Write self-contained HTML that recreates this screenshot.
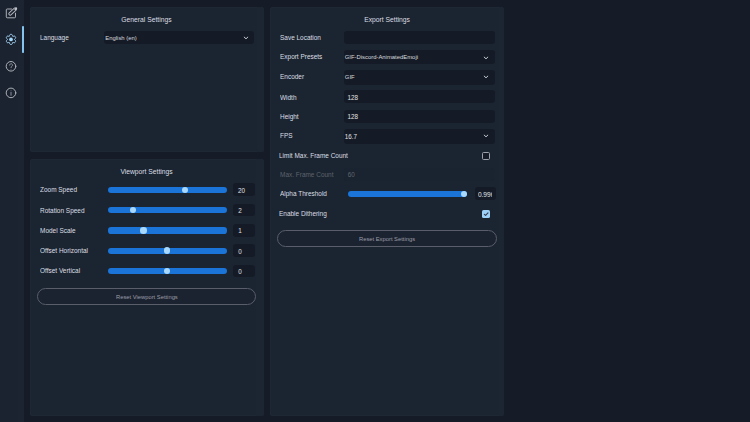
<!DOCTYPE html>
<html><head><meta charset="utf-8">
<style>
*{box-sizing:border-box;margin:0;padding:0}
html,body{width:750px;height:422px;overflow:hidden;background:#161c27;font-family:"Liberation Sans",sans-serif;color:#dcdee3}
div,svg{position:absolute}
#side{left:0;top:0;width:23.6px;height:422px;background:#1b2330}
#side2{left:17.5px;top:0;width:6.1px;height:422px;background:#1c2431}
.ind{left:22px;top:26.2px;width:1.5px;height:27px;background:#84c3ee;border-radius:0.75px}
.panel{background:#1b2531;border-radius:2.5px;overflow:hidden;box-shadow:inset 0 0 0 1px #1e2835}
.strip{background:#1c2633}
.t{white-space:nowrap;font-size:6.8px;line-height:8px;color:#dcdee3;transform:scaleX(0.95);transform-origin:0 0}
.ttl{white-space:nowrap;font-size:7.1px;line-height:8px;color:#dcdee3;width:234px;text-align:center}
.ttl span{display:inline-block;transform:scaleX(0.95)}
.inp{background:#151b26;border-radius:3px;height:13.5px}
.itx{white-space:nowrap;font-size:5.9px;line-height:8px;color:#d8dade;transform:scaleX(1);transform-origin:0 0}
.num{white-space:nowrap;font-size:6.3px;line-height:8px;color:#e0e2e6}
.chev{width:6px;height:4px}
.track{height:6.2px;background:#1b74d8;border-radius:3.1px}
.thumb{width:6.6px;height:6.6px;border-radius:50%;background:#a8d8fc}
.vbox{width:21.4px;height:12.8px;background:#151b26;border-radius:3px;overflow:hidden}
.btn{border:1px solid #5a5d6a;border-radius:9px;background:#1b2230}
.btx{white-space:nowrap;font-size:5.8px;line-height:8px;color:#9b9ea7}
</style></head><body>
<div id="side"></div><div id="side2"></div>
<div class="ind"></div>
<!-- sidebar icons -->
<svg style="left:0;top:0" width="24" height="110" viewBox="0 0 24 110">
  <g fill="none" stroke="#b3b6bd" stroke-width="0.95" stroke-linecap="round" stroke-linejoin="round">
    <path d="M11.6 9H7.2a0.9 0.9 0 0 0-0.9 0.9V16.9a0.9 0.9 0 0 0 0.9 0.9H14.6a0.9 0.9 0 0 0 0.9-0.9V13.2"/>
    <rect x="7.9" y="10.2" width="9.5" height="2.6" rx="1.3" transform="rotate(-42 12.65 11.5)"/>
    <circle cx="11" cy="66.3" r="4.8"/>
    <circle cx="11" cy="92.9" r="4.8"/>
  </g>
  <g fill="none" stroke="#9a9da5" stroke-width="0.9" stroke-linecap="round">
    <path d="M9.6 65.1a1.45 1.45 0 1 1 2.2 1.25c-.5.35-.8.6-.8 1.2"/>
    <path d="M11 92.3V95.3"/>
  </g>
  <circle cx="11" cy="69.2" r=".45" fill="#9a9da5"/>
  <circle cx="11" cy="90.8" r=".45" fill="#9a9da5"/>
  <path d="M15.2 9.4l1.2-1.2" stroke="#c4c6cc" stroke-width="1.6" stroke-linecap="round"/>
  <path d="M14.50 39.40 L14.61 39.64 L14.89 39.91 L15.23 40.24 L15.50 40.61 L15.64 40.98 L15.63 41.32 L15.53 41.63 L15.37 41.92 L15.20 42.20 L14.98 42.45 L14.69 42.63 L14.30 42.70 L13.84 42.64 L13.39 42.51 L13.01 42.41 L12.75 42.43 L12.60 42.64 L12.50 43.02 L12.39 43.48 L12.21 43.90 L11.96 44.21 L11.65 44.37 L11.33 44.44 L11.00 44.45 L10.67 44.44 L10.35 44.37 L10.04 44.21 L9.79 43.90 L9.61 43.48 L9.50 43.02 L9.40 42.64 L9.25 42.43 L8.99 42.41 L8.61 42.51 L8.16 42.64 L7.70 42.70 L7.31 42.63 L7.02 42.45 L6.80 42.20 L6.63 41.92 L6.47 41.63 L6.37 41.32 L6.36 40.98 L6.50 40.61 L6.77 40.24 L7.11 39.91 L7.39 39.64 L7.50 39.40 L7.39 39.16 L7.11 38.89 L6.77 38.56 L6.50 38.19 L6.36 37.82 L6.37 37.48 L6.47 37.17 L6.63 36.88 L6.80 36.60 L7.02 36.35 L7.31 36.17 L7.70 36.10 L8.16 36.16 L8.61 36.29 L8.99 36.39 L9.25 36.37 L9.40 36.16 L9.50 35.78 L9.61 35.32 L9.79 34.90 L10.04 34.59 L10.35 34.43 L10.67 34.36 L11.00 34.35 L11.33 34.36 L11.65 34.43 L11.96 34.59 L12.21 34.90 L12.39 35.32 L12.50 35.78 L12.60 36.16 L12.75 36.37 L13.01 36.39 L13.39 36.29 L13.84 36.16 L14.30 36.10 L14.69 36.17 L14.98 36.35 L15.20 36.60 L15.37 36.88 L15.53 37.17 L15.63 37.48 L15.64 37.82 L15.50 38.19 L15.23 38.56 L14.89 38.89 L14.61 39.16 L14.50 39.40Z" fill="none" stroke="#aadafb" stroke-width="1" stroke-linejoin="round"/>
  <circle cx="11" cy="39.4" r="1.85" fill="#a6d8fb"/>
</svg>

<!-- ================= General Settings ================= -->
<div class="panel" style="left:29.6px;top:7px;width:234.2px;height:145px"><div class="strip" style="left:227.4px;top:0;width:6.8px;height:145px"></div></div>
<div class="ttl" style="left:29.6px;top:15.5px"><span>General Settings</span></div>
<div class="t" style="left:40px;top:34px">Language</div>
<div class="inp" style="left:104.3px;top:30.9px;width:150.2px;height:13.6px"></div>
<div class="itx" style="left:105.3px;top:34.3px">English (en)</div>
<svg class="chev" style="left:243.1px;top:35.6px" viewBox="0 0 6 4"><path d="M1.2 1.1L3 2.8 4.8 1.1" fill="none" stroke="#d2d4da" stroke-width="0.95" stroke-linecap="round" stroke-linejoin="round"/></svg>

<!-- ================= Viewport Settings ================= -->
<div class="panel" style="left:29.6px;top:159px;width:234.2px;height:257px"><div class="strip" style="left:226.4px;top:0;width:7.8px;height:257px"></div></div>
<div class="ttl" style="left:29.6px;top:167.5px"><span>Viewport Settings</span></div>

<div class="t" style="left:40px;top:186px">Zoom Speed</div>
<div class="track" style="left:107.7px;top:186.8px;width:119.3px"></div>
<div class="thumb" style="left:181.7px;top:186.7px"></div>
<div class="vbox" style="left:233.4px;top:183.4px"></div>
<div class="num" style="left:238px;top:186.7px">20</div>

<div class="t" style="left:40px;top:207px">Rotation Speed</div>
<div class="track" style="left:107.7px;top:207.1px;width:119.3px"></div>
<div class="thumb" style="left:129.5px;top:206.9px"></div>
<div class="vbox" style="left:233.4px;top:203.7px"></div>
<div class="num" style="left:238.3px;top:207px">2</div>

<div class="t" style="left:40px;top:227px">Model Scale</div>
<div class="track" style="left:107.7px;top:227.4px;width:119.3px"></div>
<div class="thumb" style="left:140.0px;top:227.2px"></div>
<div class="vbox" style="left:233.4px;top:224px"></div>
<div class="num" style="left:238.3px;top:227.3px">1</div>

<div class="t" style="left:40px;top:247px">Offset Horizontal</div>
<div class="track" style="left:107.7px;top:247.5px;width:119.3px"></div>
<div class="thumb" style="left:163.9px;top:247.4px"></div>
<div class="vbox" style="left:233.4px;top:244.3px"></div>
<div class="num" style="left:238.3px;top:247.6px">0</div>

<div class="t" style="left:40px;top:267px">Offset Vertical</div>
<div class="track" style="left:107.7px;top:268.1px;width:119.3px"></div>
<div class="thumb" style="left:163.9px;top:267.8px"></div>
<div class="vbox" style="left:233.4px;top:264.6px"></div>
<div class="num" style="left:238.3px;top:267.9px">0</div>

<div class="btn" style="left:36.6px;top:288.1px;width:219.8px;height:17px"></div>
<div class="btx" style="left:116px;top:293px">Reset Viewport Settings</div>

<!-- ================= Export Settings ================= -->
<div class="panel" style="left:270px;top:7px;width:234.2px;height:409px"><div class="strip" style="left:228.6px;top:0;width:5.6px;height:409px"></div></div>
<div class="ttl" style="left:270px;top:15.5px"><span>Export Settings</span></div>

<div class="t" style="left:280px;top:34px">Save Location</div>
<div class="inp" style="left:344px;top:30.7px;width:151px"></div>

<div class="t" style="left:280px;top:53px">Export Presets</div>
<div class="inp" style="left:344px;top:49.9px;width:150.5px;height:14.3px"></div>
<div class="itx" style="left:344.7px;top:52.7px">GIF-Discord-AnimatedEmoji</div>
<svg class="chev" style="left:483.3px;top:55.5px" viewBox="0 0 6 4"><path d="M1.2 1.1L3 2.8 4.8 1.1" fill="none" stroke="#d2d4da" stroke-width="0.95" stroke-linecap="round" stroke-linejoin="round"/></svg>

<div class="t" style="left:280px;top:73px">Encoder</div>
<div class="inp" style="left:344px;top:70px;width:150.5px;height:14.5px"></div>
<div class="itx" style="left:344.8px;top:73.3px">GIF</div>
<svg class="chev" style="left:483.3px;top:75.4px" viewBox="0 0 6 4"><path d="M1.2 1.1L3 2.8 4.8 1.1" fill="none" stroke="#d2d4da" stroke-width="0.95" stroke-linecap="round" stroke-linejoin="round"/></svg>

<div class="t" style="left:280px;top:94px">Width</div>
<div class="inp" style="left:344px;top:90.2px;width:151px;height:13.3px"></div>
<div class="num" style="left:347.6px;top:94px">128</div>

<div class="t" style="left:280px;top:113px">Height</div>
<div class="inp" style="left:344px;top:109.7px;width:151px;height:13.3px"></div>
<div class="num" style="left:347.6px;top:113.2px">128</div>

<div class="t" style="left:280px;top:132px">FPS</div>
<div class="inp" style="left:344px;top:128.5px;width:150.7px;height:15.2px"></div>
<div class="num" style="left:344.7px;top:132.7px">16.7</div>
<svg class="chev" style="left:483.3px;top:133.5px" viewBox="0 0 6 4"><path d="M1.2 1.1L3 2.8 4.8 1.1" fill="none" stroke="#d2d4da" stroke-width="0.95" stroke-linecap="round" stroke-linejoin="round"/></svg>

<div class="t" style="left:278.6px;top:152px">Limit Max. Frame Count</div>
<div style="left:481.8px;top:152px;width:8.2px;height:8px;border:1px solid #9ea1aa;border-radius:1.6px;background:#171d28"></div>

<div class="t" style="left:279.8px;top:171px;color:#5d626c">Max. Frame Count</div>
<div class="inp" style="left:344px;top:168.2px;width:149.5px;height:13px;background:#1a2330"></div>
<div class="num" style="left:347.8px;top:170.6px;color:#61666f">60</div>

<div class="t" style="left:280px;top:190px">Alpha Threshold</div>
<div class="track" style="left:347.8px;top:191px;width:119.5px"></div>
<div class="thumb" style="left:460.8px;top:190.8px"></div>
<div class="vbox" style="left:474.7px;top:187.4px;width:20.9px;height:12.8px"><div style="left:3.2px;top:0;width:14.6px;height:12.8px;overflow:hidden"><div class="num" style="left:0;top:3.5px;font-size:6.6px">0.996</div></div></div>

<div class="t" style="left:279px;top:210px">Enable Dithering</div>
<div style="left:481.8px;top:209.9px;width:8.2px;height:8px;background:#9dd0f7;border-radius:1.6px"></div>
<svg style="left:481.8px;top:209.9px" width="8.2" height="8" viewBox="0 0 8 8"><path d="M2.3 4.4L3.5 5.4 5.9 2.9" fill="none" stroke="#363b50" stroke-width="1.15" stroke-linecap="round" stroke-linejoin="round"/></svg>

<div class="btn" style="left:277px;top:230.1px;width:219.8px;height:16.6px"></div>
<div class="btx" style="left:359px;top:234.8px">Reset Export Settings</div>
</body></html>
